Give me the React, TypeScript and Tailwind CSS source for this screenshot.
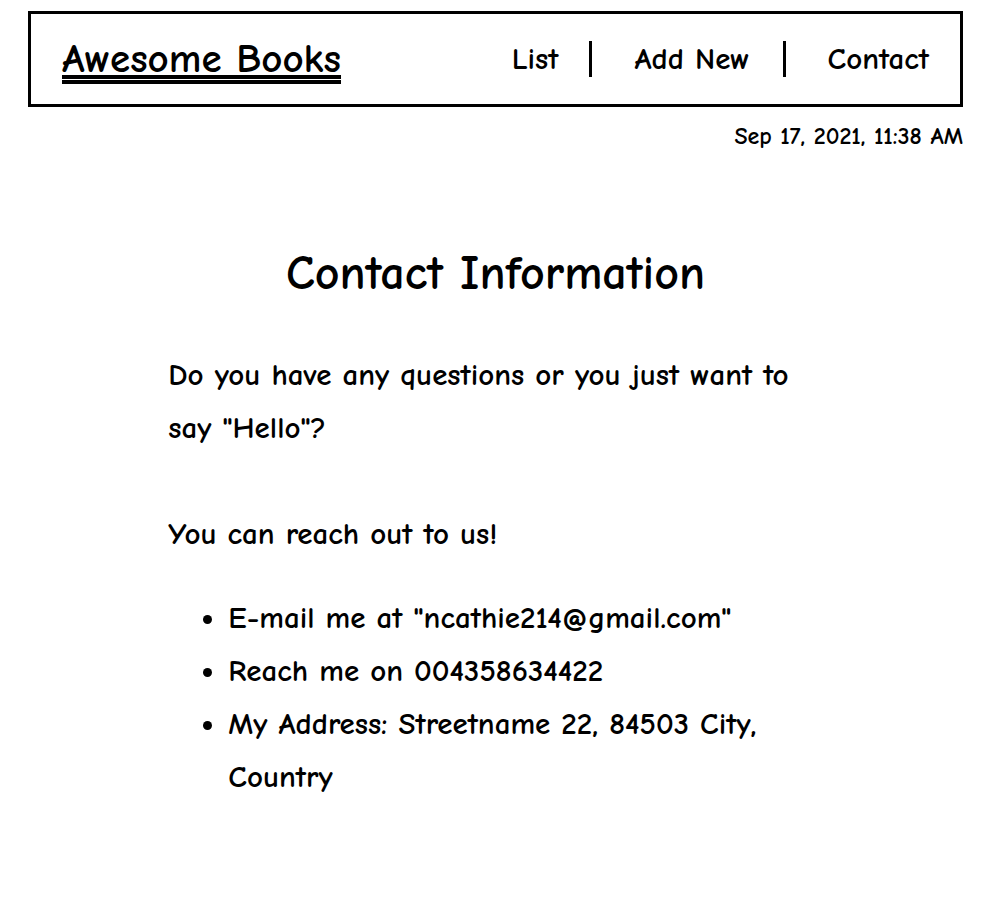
const details = [
  'E-mail me at "ncathie214@gmail.com"',
  'Reach me on 004358634422',
  'My Address: Streetname 22, 84503 City, Country',
];

export default function App() {
  return (
    <div className="min-h-screen bg-white pt-[11px] pr-[30px] pl-7 font-['Comic_Neue','Comic_Sans_MS','Lato',sans-serif] font-bold text-black">
      <header className="flex h-24 items-center justify-between border-[3px] border-black pl-[31px]">
        <a href="#home" className="border-b-4 border-black pt-1 text-[41px] leading-[42px] underline decoration-4 underline-offset-[3px] [text-decoration-skip-ink:none]">Awesome Books</a>
        <nav className="flex items-center text-[31px] leading-9">
          <a href="#list" className="border-r-[3px] border-black pr-[31px]">List</a>
          <a href="#new" className="border-r-[3px] border-black pr-[33px] pl-[42px]">Add New</a>
          <a href="#contact" className="pr-[31px] pl-[42px]">Contact</a>
        </nav>
      </header>
      <p className="mt-[13px] text-right text-2xl leading-8">Sep 17, 2021, 11:38 AM</p>
      <main className="mx-auto mt-[92px] w-[70%]">
        <h1 className="text-center text-5xl leading-[60px]">Contact Information</h1>
        <div className="mt-[45px] text-[31px] leading-[53px]">
          <p>Do you have any questions or you just want to say "Hello"?</p>
          <p className="mt-[53px]">You can reach out to us!</p>
          <ul className="mt-[31px] list-disc pl-[60px]">
            {details.map((d) => <li key={d}>{d}</li>)}
          </ul>
        </div>
      </main>
    </div>
  );
}
